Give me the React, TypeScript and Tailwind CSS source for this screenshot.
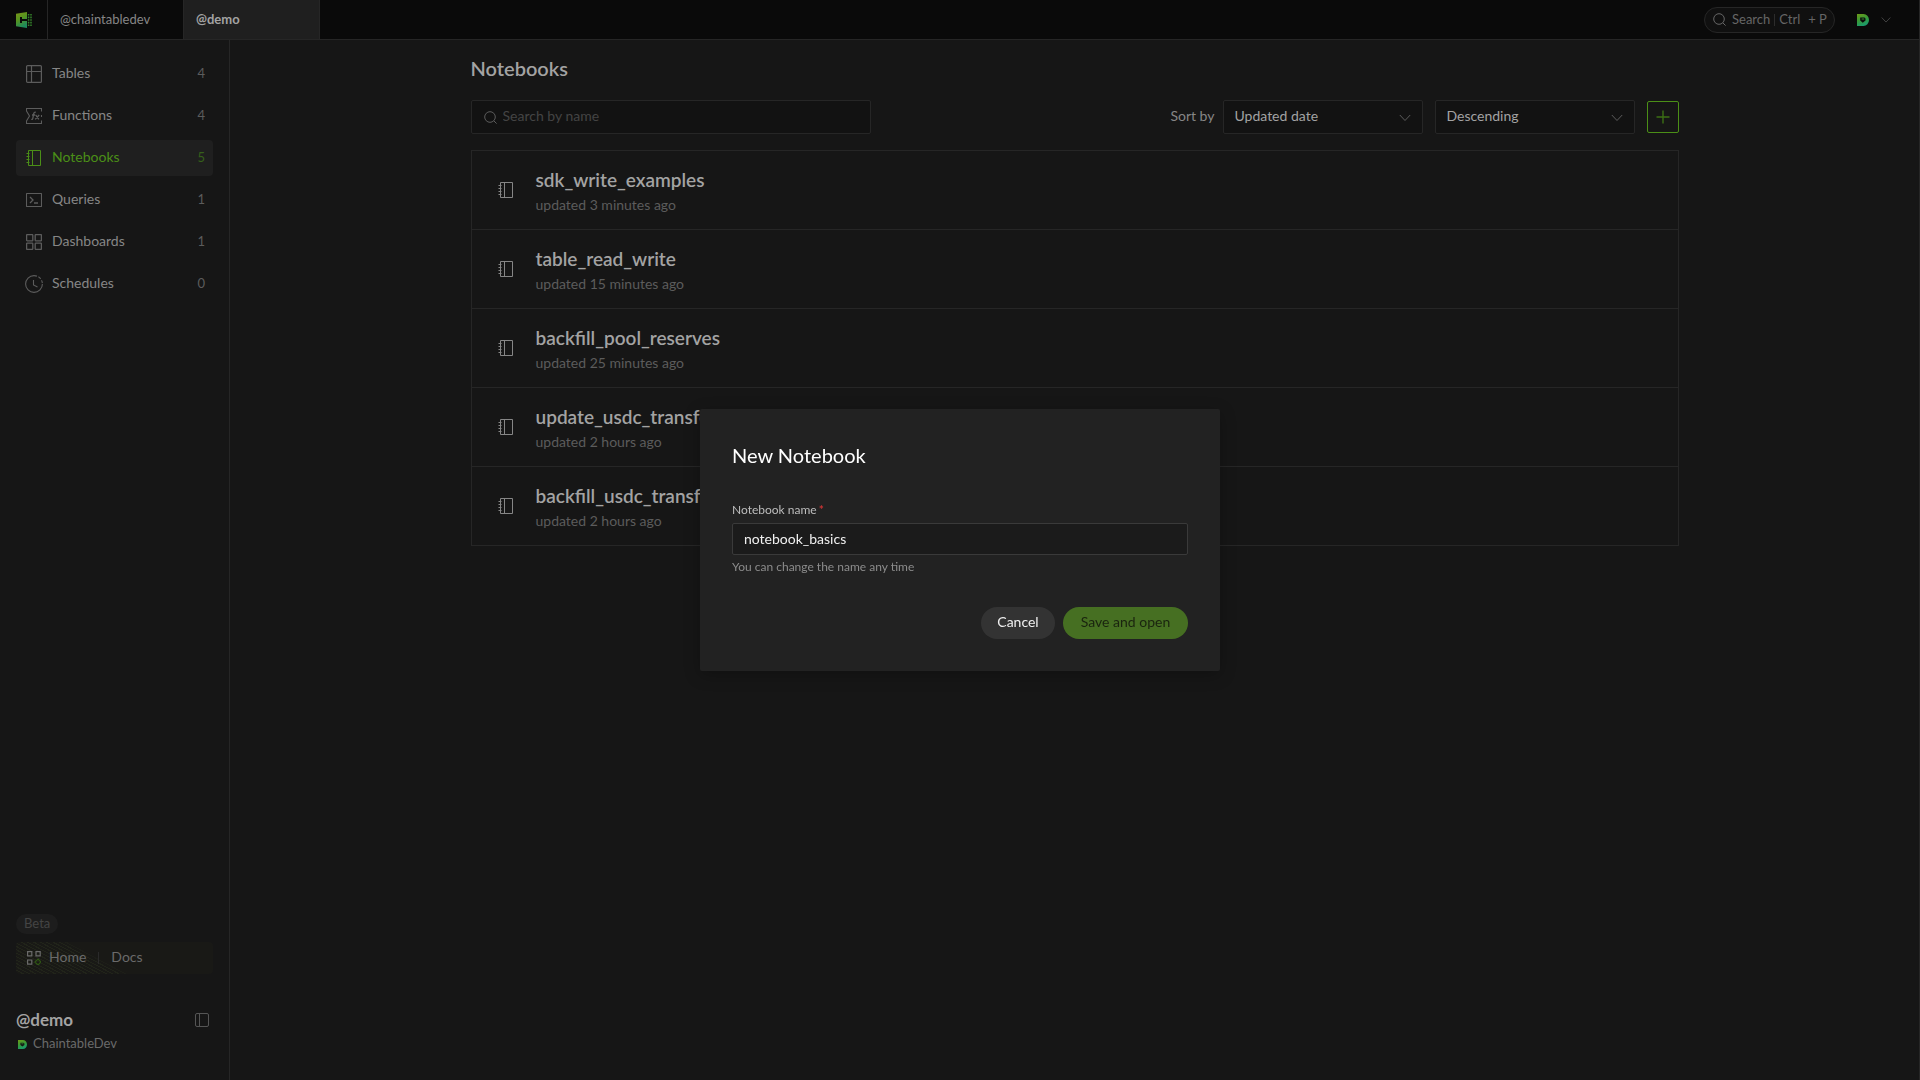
import React, { useState } from "react";
import clsx from "clsx";

interface INavItem {
  label: string;
  count: number;
  icon: React.FC;
}

interface INotebook {
  name: string;
  updated: string;
}

const TablesIcon = () => (
  <svg width="16" height="18" viewBox="0 0 16 18" fill="none" stroke="currentColor" strokeWidth="1.2">
    <rect x="0.6" y="0.6" width="14.8" height="16.8" rx="1" />
    <path d="M5.5 0.5v17M0.5 6.5h15" />
  </svg>
);

const FunctionsIcon = () => (
  <svg width="16" height="16" viewBox="0 0 16 16" fill="none" stroke="currentColor" strokeWidth="1.1">
    <path d="M15.5 3.5v-3H0.5v2.5L3.5 8L0.5 13v2.5h15v-3M15.5 7v2" />
    <path d="M9.8 4.3c-1.3-.4-1.9.2-2.1 1.4L6.9 10c-.2 1.1-.7 1.6-1.6 1.4M6 7h3.2M9.8 7l3 4.4M13.2 7l-4 4.4" strokeWidth="1.3" />
  </svg>
);

const NotebookIcon = () => (
  <svg width="16" height="16" viewBox="0 0 16 16" fill="none" stroke="currentColor">
    <path d="M2.5 0.5h12v15h-12zM6.5 0.5v15" />
    <path d="M0.5 3.5h3M0.5 6.5h3M0.5 9.5h3M0.5 12.5h3" />
  </svg>
);

const QueriesIcon = () => (
  <svg width="16" height="14" viewBox="0 0 16 14" fill="none" stroke="currentColor" strokeWidth="1.1">
    <rect x="0.5" y="0.5" width="15" height="13" rx="0.5" />
    <path d="M4 4l3 3-3 3M8 10h4" strokeWidth="1.3" />
  </svg>
);

const DashboardsIcon = () => (
  <svg width="16" height="16" viewBox="0 0 16 16" fill="none" stroke="currentColor" strokeWidth="1.3">
    <rect x="0.6" y="0.6" width="6.2" height="6.2" rx="0.6" />
    <rect x="9.2" y="0.6" width="6.2" height="6.2" rx="0.6" />
    <rect x="0.6" y="9.2" width="6.2" height="6.2" rx="0.6" />
    <rect x="9.2" y="9.2" width="6.2" height="6.2" rx="0.6" />
  </svg>
);

const SchedulesIcon = () => (
  <svg width="18" height="18" viewBox="0 0 18 18" fill="none" stroke="currentColor" strokeWidth="1.1">
    <path d="M9 0.6A8.4 8.4 0 1 0 17.4 9" />
    <path d="M9 0.6A8.4 8.4 0 0 1 17.4 9" strokeDasharray="3 1.6" />
    <path d="M8.5 5v5l4 2" />
  </svg>
);

const SearchIcon = () => (
  <svg width="13" height="13" viewBox="0 0 13 13" fill="none" stroke="currentColor">
    <circle cx="6" cy="6" r="5.3" />
    <path d="M9.8 9.8l2.8 2.8" />
  </svg>
);

const ChevronIcon = ({ className }: { className?: string }) => (
  <svg width="12" height="8" viewBox="0 0 12 8" fill="none" stroke="currentColor" className={className}>
    <path d="M0.8 1L6 6.5L11.2 1" />
  </svg>
);

const BrandLogo = () => (
  <svg width="16" height="16" viewBox="0 0 16 16">
    <defs>
      <linearGradient id="brand" x1="0" y1="0" x2="0.4" y2="1">
        <stop offset="0" stopColor="#7d9519" />
        <stop offset="0.5" stopColor="#56941f" />
        <stop offset="1" stopColor="#1f8a5c" />
      </linearGradient>
    </defs>
    <path
      fill="url(#brand)"
      fillRule="evenodd"
      d="M0 1.8L11 0v7H6V5H4v6h2V9h5v7L0 14.2z"
    />
    <path d="M12.6 2v12.4M15 2v12.4" stroke="#35852b" strokeWidth="1.5" strokeDasharray="1.6 1" />
  </svg>
);

const DLogo = ({ size }: { size: number }) => (
  <svg width={size} height={size} viewBox="0 0 12 12">
    <defs>
      <linearGradient id={`avatar-${size}`} x1="0" y1="0" x2="0.4" y2="1">
        <stop offset="0" stopColor="#6f9a18" />
        <stop offset="0.5" stopColor="#3c9a34" />
        <stop offset="1" stopColor="#1b9a6a" />
      </linearGradient>
    </defs>
    <path
      fill={`url(#avatar-${size})`}
      fillRule="evenodd"
      d="M0 0h6.5a5.5 6 0 0 1 0 12H0zM3.2 3.6v3L5.8 8.8l2.7-2.2V4.8A1.6 1.6 0 0 0 7 3.6z"
    />
    <path d="M4.6 5h2.6" stroke="#37902f" />
  </svg>
);

const AppsIcon = () => (
  <svg width="14" height="14" viewBox="0 0 14 14" fill="none" stroke="currentColor" strokeWidth="1.2">
    <path d="M0.6 0.6h4.2v4.2H0.6zM9 0.6h4.2v4.2H9zM0.6 9h4.2v4.2H0.6z" />
    <path d="M11 8l3 3-3 3-3-3z" stroke="#2f5714" />
  </svg>
);

const PanelIcon = () => (
  <svg width="14" height="14" viewBox="0 0 14 14" fill="none" stroke="currentColor">
    <rect x="0.5" y="0.5" width="13" height="13" rx="1.5" />
    <path d="M4.5 0.5v13" />
  </svg>
);

const navItems: INavItem[] = [
  { label: "Tables", count: 4, icon: TablesIcon },
  { label: "Functions", count: 4, icon: FunctionsIcon },
  { label: "Notebooks", count: 5, icon: NotebookIcon },
  { label: "Queries", count: 1, icon: QueriesIcon },
  { label: "Dashboards", count: 1, icon: DashboardsIcon },
  { label: "Schedules", count: 0, icon: SchedulesIcon },
];

const notebooks: INotebook[] = [
  { name: "sdk_write_examples", updated: "updated 3 minutes ago" },
  { name: "table_read_write", updated: "updated 15 minutes ago" },
  { name: "backfill_pool_reserves", updated: "updated 25 minutes ago" },
  { name: "update_usdc_transfers", updated: "updated 2 hours ago" },
  { name: "backfill_usdc_transfers", updated: "updated 2 hours ago" },
];

const Header = () => (
  <header className="flex h-10 items-stretch justify-between border-b border-[#262626] bg-[#0a0a0a]">
    <div className="flex items-stretch">
      <a href="#" aria-label="Chaintable" className="flex w-12 items-center justify-center border-r border-[#262626]">
        <BrandLogo />
      </a>
      <a
        href="#chaintabledev"
        className="flex w-34 items-center border-r border-[#262626] px-3 text-[13px] text-[#868686]"
      >
        @chaintabledev
      </a>
      <a
        href="#demo"
        className="flex w-34 items-center border-r border-[#262626] bg-[#1f1f1f] px-3 text-[13px] font-bold text-[#a3a3a3]"
      >
        @demo
      </a>
    </div>
    <div className="flex items-center gap-[22px] pr-7">
      <button className="flex h-[26px] w-[131px] items-center rounded-full border border-[#262626] bg-[#101010] pl-2 text-[13px] text-[#666]">
        <SearchIcon />
        <span className="ml-1.5">Search</span>
        <span className="mx-1 h-3 w-px bg-[#2c2c2c]" />
        <span>Ctrl</span>
        <span className="ml-2">+ P</span>
      </button>
      <button aria-label="Account" className="flex items-center gap-3 text-[#4c4c4c]">
        <DLogo size={12} />
        <ChevronIcon className="w-2.5" />
      </button>
    </div>
  </header>
);

const Sidebar = () => (
  <aside className="flex w-[230px] shrink-0 flex-col justify-between border-r border-[#262626] px-4 pt-4 pb-6">
    <nav className="flex flex-col gap-1.5">
      {navItems.map(({ label, count, icon: Icon }) => {
        const isActive = label === "Notebooks";

        return (
          <a
            key={label}
            href={`#${label.toLowerCase()}`}
            className={clsx(
              "flex h-9 items-center rounded-sm pr-2 pl-2 text-sm",
              isActive ? "bg-[#1f1f1f] text-[#4b8f17]" : "text-[#868686]"
            )}
          >
            <span className={clsx("mr-2 flex w-5 justify-center", !isActive && "text-[#5c5c5c]")}>
              <Icon />
            </span>
            <span className="flex-1 pb-0.5">{label}</span>
            <span className={clsx("pb-0.5 text-[13px]", isActive ? "text-[#36601a]" : "text-[#5c5c5c]")}>{count}</span>
          </a>
        );
      })}
    </nav>

    <div>
      <span className="inline-flex h-5 items-center rounded-full bg-[#1d1d1d] px-2 text-[13px] text-[#444]">Beta</span>
      <div className="mt-2 flex h-8 items-center rounded-sm bg-[#191916] bg-[linear-gradient(28deg,transparent_0,transparent_40%,#191916_45%),repeating-linear-gradient(28deg,#21241a_0,#21241a_1px,#191916_1px,#191916_3px)] pl-[11px] text-sm text-[#6a6a6a]">
        <AppsIcon />
        <a href="#home" className="ml-2 pb-0.5">
          Home
        </a>
        <span className="mx-3 h-3 w-px bg-[#2a2a2a]" />
        <a href="#docs" className="pb-0.5">
          Docs
        </a>
      </div>
      <div className="mt-[34px] flex items-center justify-between pr-1">
        <strong className="text-[17px] leading-6 text-[#a3a3a3]">@demo</strong>
        <button aria-label="Collapse sidebar" className="text-[#555]">
          <PanelIcon />
        </button>
      </div>
      <div className="flex h-6 items-center gap-1.5 pl-0.5 text-[13px] text-[#6a6a6a]">
        <DLogo size={9} />
        ChaintableDev
      </div>
    </div>
  </aside>
);

const SortSelect = ({ id, label, options }: { id: string; label: string; options: string[] }) => (
  <div className="relative">
    <select
      id={id}
      aria-label={label}
      className="block h-[34px] w-50 appearance-none rounded-xs border border-[#262626] bg-[#121212] px-[11px] pb-0.5 text-sm text-[#a3a3a3]"
    >
      {options.map((option) => (
        <option key={option}>{option}</option>
      ))}
    </select>
    <ChevronIcon className="pointer-events-none absolute top-3.5 right-3 text-[#5c5c5c]" />
  </div>
);

const NewNotebookModal = () => {
  const [name, setName] = useState("notebook_basics");

  return (
    <div className="fixed inset-0 z-50 flex items-center justify-center p-4">
      <form
        role="dialog"
        aria-labelledby="new-notebook-title"
        onSubmit={(e) => e.preventDefault()}
        className="w-full max-w-[520px] rounded-xs bg-[#222] p-8 shadow-[0_4px_16px_rgba(0,0,0,0.25)]"
      >
        <h2 id="new-notebook-title" className="mb-8 text-xl text-white">
          New Notebook
        </h2>
        <label htmlFor="notebook-name" className="mb-1 block text-xs leading-[18px] text-[#bdbdbd]">
          Notebook name<span className="ml-0.5 font-bold text-[#c93434]">*</span>
        </label>
        <input
          id="notebook-name"
          value={name}
          onChange={(e) => setName(e.target.value)}
          className="block h-8 w-full rounded-xs border border-[#3a3a3a] bg-[#1b1b1b] px-[11px] pb-0.5 text-sm text-[#f0f0f0] outline-none"
        />
        <p className="mt-1 text-xs text-[#8c8c8c]">You can change the name any time</p>
        <div className="mt-8 flex justify-end gap-2">
          <button type="button" className="h-8 w-[74px] rounded-full bg-[#333] pb-0.5 text-sm text-[#f0f0f0]">
            Cancel
          </button>
          <button type="submit" className="h-8 w-[125px] rounded-full bg-[#466f22] pb-0.5 text-sm text-[#1a240f]">
            Save and open
          </button>
        </div>
      </form>
    </div>
  );
};

export default function App() {
  return (
    <div className="flex min-h-screen flex-col border-r border-[#262626] bg-[#161616] font-[Lato,sans-serif]">
      <Header />
      <div className="flex flex-1">
        <Sidebar />
        <main className="flex-1 px-6 pt-3.5">
          <div className="mx-auto max-w-[1208px]">
            <h1 className="text-xl leading-7 font-semibold text-[#a3a3a3]">Notebooks</h1>

            <div className="mt-[18px] flex items-center justify-between">
              <label className="flex h-[34px] w-100 items-center gap-1.5 rounded-xs border border-[#262626] bg-[#121212] px-3 text-[#5c5c5c]">
                <SearchIcon />
                <input
                  type="search"
                  aria-label="Search by name"
                  placeholder="Search by name"
                  className="flex-1 bg-transparent pb-0.5 text-sm outline-none placeholder:text-[#444]"
                />
              </label>
              <div className="flex items-center">
                <label htmlFor="sort-field" className="mr-2 pb-0.5 text-sm text-[#868686]">
                  Sort by
                </label>
                <div className="flex items-center gap-3">
                  <SortSelect id="sort-field" label="Sort by" options={["Updated date", "Name"]} />
                  <SortSelect id="sort-order" label="Sort order" options={["Descending", "Ascending"]} />
                  <button
                    aria-label="New notebook"
                    className="flex size-8 items-center justify-center rounded-xs border border-[#4b8f17] text-[#3c7015]"
                  >
                    <svg width="14" height="14" viewBox="0 0 14 14" stroke="currentColor" strokeWidth="1.4">
                      <path d="M7 0.5v13M0.5 7h13" />
                    </svg>
                  </button>
                </div>
              </div>
            </div>

            <ul className="mt-4 border-x border-t border-[#262626]">
              {notebooks.map((notebook) => (
                <li
                  key={notebook.name}
                  className="flex h-[79px] items-center gap-[22px] border-b border-[#262626] pl-[26px]"
                >
                  <span className="text-[#868686]">
                    <NotebookIcon />
                  </span>
                  <div className="pt-1">
                    <a
                      href={`#${notebook.name}`}
                      className="block text-[19px] leading-[25px] font-semibold text-[#a3a3a3]"
                    >
                      {notebook.name}
                    </a>
                    <p className="text-sm leading-[25px] text-[#5c5c5c]">{notebook.updated}</p>
                  </div>
                </li>
              ))}
            </ul>
          </div>
        </main>
      </div>
      <NewNotebookModal />
    </div>
  );
}
